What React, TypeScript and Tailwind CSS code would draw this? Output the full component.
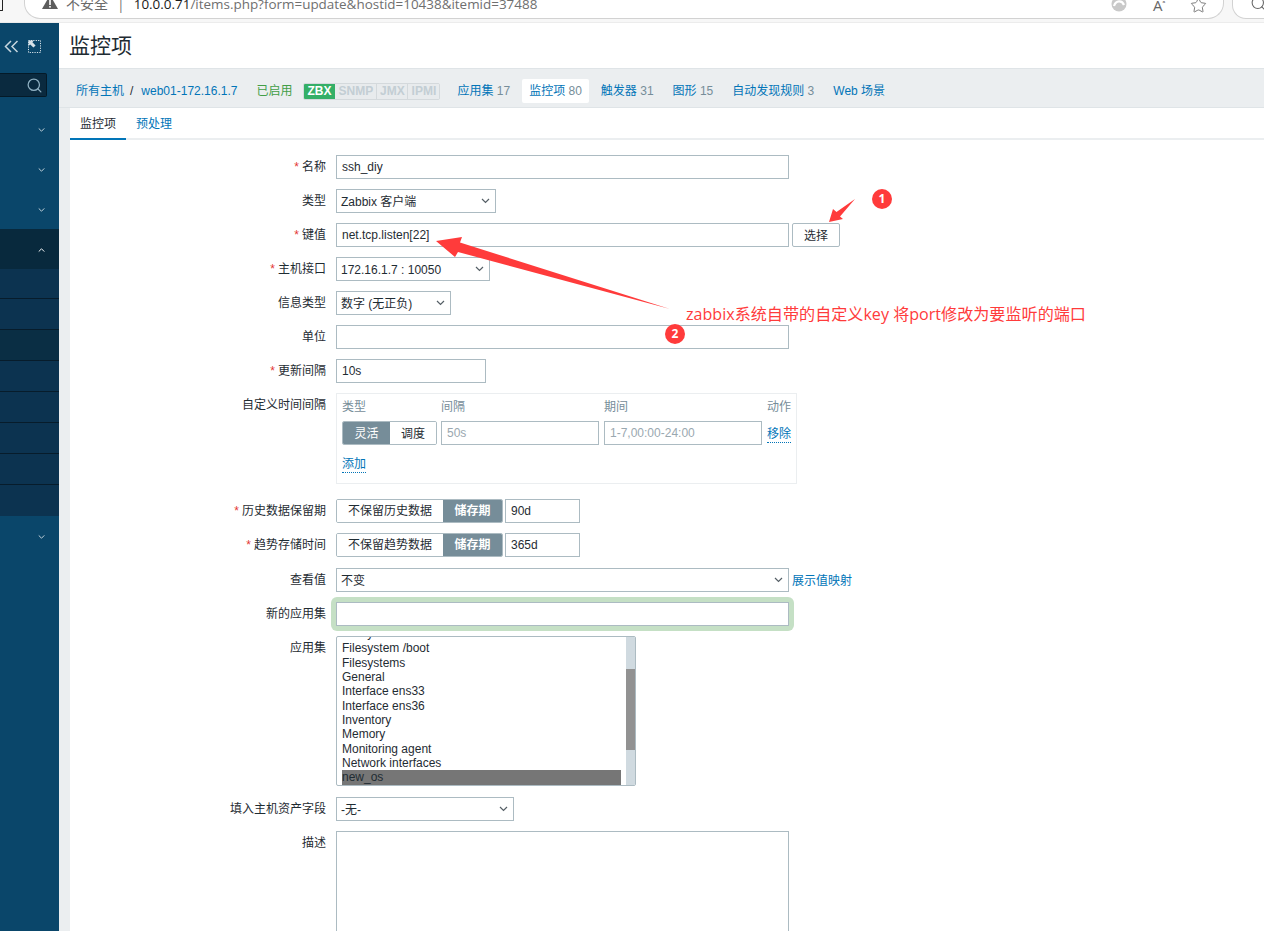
import type { ReactNode } from "react";
import { Search, Star } from "lucide-react";

const inputClass =
  "h-6 border border-[#acbbc2] bg-white px-[5px] text-xs text-[#1f2c33] outline-none";

const appItems = [
  "Filesystem /boot",
  "Filesystems",
  "General",
  "Interface ens33",
  "Interface ens36",
  "Inventory",
  "Memory",
  "Monitoring agent",
  "Network interfaces",
];

function Chevron({ up = false, className = "" }: { up?: boolean; className?: string }) {
  return (
    <svg width="9" height="6" viewBox="0 0 9 6" fill="none" className={className}>
      <path
        d={up ? "M1 5L4.5 1.5L8 5" : "M1 1L4.5 4.5L8 1"}
        stroke="currentColor"
        strokeWidth="1.2"
      />
    </svg>
  );
}

function MenuRow({ up = false, className = "" }: { up?: boolean; className?: string }) {
  return (
    <div className={`flex h-10 items-center justify-end pt-[2px] pr-[13px] ${className}`}>
      <Chevron up={up} className="scale-[0.8]" />
    </div>
  );
}

function Row({
  label,
  required = false,
  children,
}: {
  label: string;
  required?: boolean;
  children: ReactNode;
}) {
  return (
    <div className="flex items-start">
      <div className="flex h-6 w-[256px] items-center justify-end text-xs text-[#1f2c33]">
        {required && <span className="mr-[3px] text-[#e33734]">*</span>}
        {label}
      </div>
      <div className="ml-[10px] flex items-start">{children}</div>
    </div>
  );
}

function Select({ value, width }: { value: string; width: string }) {
  return (
    <div className={`${inputClass} ${width} flex items-center justify-between !pl-1 !pr-[5px]`}>
      <span className="pt-[2px]">{value}</span>
      <Chevron className="text-[#555f66]" />
    </div>
  );
}

function Segments({ off, on }: { off: string; on: string }) {
  return (
    <div className="flex h-6 w-[167px] overflow-hidden rounded-[2px] border border-[#acbbc2] text-xs">
      <div className="flex w-[106px] items-center justify-center bg-white text-[#1f2c33]">{off}</div>
      <div className="flex flex-1 items-center justify-center bg-[#768d99] font-bold text-white">{on}</div>
    </div>
  );
}

function BrowserBar() {
  return (
    <div className="flex h-[23px] shrink-0 border-b border-[#ececec] bg-[#f7f7f7]">
      <div className="h-[11px] w-[3px] rounded-br-[1px] border-r border-b border-[#222]" />
      <div className="ml-[21px] flex h-[19px] w-[1200px] items-start overflow-hidden rounded-b-[16px] border border-t-0 border-[#d2d2d2] bg-white [font-family:'Open_Sans','Noto_Sans_CJK_SC',sans-serif] text-[14px] leading-[18px]">
        <svg width="16" height="14" viewBox="0 0 16 14" className="ml-[17px] -mt-[5px] shrink-0">
          <path d="M8 0L16 14H0Z" fill="#5c5c5c" />
          <rect x="7.2" y="5" width="1.6" height="5" fill="#fff" />
          <rect x="7.2" y="11" width="1.6" height="1.6" fill="#fff" />
        </svg>
        <span className="ml-2 -mt-[5px] text-[#6a6a6a]">不安全</span>
        <span className="ml-[9px] -mt-[5px] text-[#777]">|</span>
        <span className="ml-[9px] -mt-[5px] whitespace-nowrap text-[13.45px] text-[#6f6f6f]">
          <span className="text-[#1a1a1a]">10.0.0.71</span>/items.php?form=update&amp;hostid=10438&amp;itemid=37488
        </span>
        <div className="ml-auto flex items-start">
          <svg width="16" height="16" viewBox="0 0 16 16" className="-mt-[4px]">
            <circle cx="8" cy="8" r="7.5" fill="#c9c9c9" />
            <path d="M3 10C5 4 11 4 13 9" stroke="#fff" strokeWidth="2.2" fill="none" />
          </svg>
          <span className="ml-[26px] -mt-[6px] text-[15px] text-[#666]">
            A<span className="align-super text-[7px]">ᵃ</span>
          </span>
          <Star size={17} strokeWidth={1.2} className="ml-[25px] mr-[16px] -mt-[3px] text-[#666]" />
        </div>
      </div>
      <div className="ml-[8px] flex h-[19px] flex-1 items-start overflow-hidden rounded-bl-[14px] border-b border-l border-[#d2d2d2] bg-white pl-[17px]">
        <Search size={17} strokeWidth={1.5} className="-mt-[5px] shrink-0 text-[#666]" />
      </div>
    </div>
  );
}

function Sidebar() {
  return (
    <div className="flex w-[59px] shrink-0 flex-col bg-[#0a466a] text-[#c9d7e0]">
      <div className="flex h-[50px] items-start pt-[17px] pl-[4px]">
        <svg width="15" height="13" viewBox="0 0 15 13" fill="none" stroke="#c6d6df" strokeWidth="1.5">
          <path d="M7 1L1.5 6.5L7 12M13.5 1L8 6.5L13.5 12" />
        </svg>
        <svg width="13" height="13" viewBox="0 0 13 13" fill="none" className="ml-[9px]">
          <rect x="0.5" y="0.5" width="12" height="12" stroke="#d7e2e8" strokeDasharray="1.2 1.2" />
          <path d="M0.5 0.5H6L4.4 2.2L7.6 5.4L5.4 7.6L2.2 4.4L0.5 6Z" fill="#d7e2e8" />
        </svg>
      </div>
      <div className="flex h-6 w-[47px] items-center justify-end rounded-r-[2px] border border-l-0 border-[#041a28] bg-[#0a2a3f] pr-[3px]">
        <Search size={17} strokeWidth={1.8} className="text-[#8fb0c2]" />
      </div>
      <div className="mt-3">
        <MenuRow />
      </div>
      <MenuRow />
      <MenuRow />
      <MenuRow up className="bg-[#08293d] text-white" />
      <div className="flex flex-col">
        {[0, 1, 2, 3, 4, 5, 6, 7].map((i) => (
          <div
            key={i}
            className={`h-[31px] border-[#071c2b] ${i === 0 ? "!h-[30px]" : ""} ${i < 7 ? "border-b" : ""} ${
              i === 2 ? "bg-[#0a2e44]" : "bg-[#0c3350]"
            }`}
          />
        ))}
      </div>
      <MenuRow />
    </div>
  );
}

function NavBar() {
  return (
    <div className="flex h-[40px] shrink-0 items-center gap-[19px] border-y border-[#dfe4e7] bg-[#ebeef0] pt-[6px] pl-[17px] text-xs text-[#0275b8]">
      <div className="whitespace-nowrap">
        所有主机<span className="ml-[6px] mr-[8px] text-[#1f2c33]">/</span>web01-172.16.1.7
      </div>
      <span className="text-[#429e47]">已启用</span>
      <div className="-ml-2 flex h-[17px] overflow-hidden rounded-[2px] border border-[#d4d9dc] text-xs font-bold text-[#c3ced4]">
        <span className="-my-px -ml-px flex w-[32px] items-center justify-center bg-[#34af67] text-white">ZBX</span>
        <span className="flex w-[42px] items-center justify-center border-r border-[#d4d9dc] bg-[#e8ebed]">SNMP</span>
        <span className="flex w-[31px] items-center justify-center border-r border-[#d4d9dc] bg-[#e8ebed]">JMX</span>
        <span className="flex w-[31px] items-center justify-center bg-[#e8ebed]">IPMI</span>
      </div>
      <span className="-ml-[2px]">应用集 <span className="text-[#768d99]">17</span></span>
      <span className="-mx-[7px] rounded-[2px] bg-white px-[7px] py-[4px]">监控项 <span className="text-[#768d99]">80</span></span>
      <span>触发器 <span className="text-[#768d99]">31</span></span>
      <span>图形 <span className="text-[#768d99]">15</span></span>
      <span>自动发现规则 <span className="text-[#768d99]">3</span></span>
      <span>Web 场景</span>
    </div>
  );
}

function CustomIntervals() {
  return (
    <div className="h-[91px] w-[461px] border border-[#ebeef0] px-[5px] pt-[5px] text-xs">
      <div className="grid grid-cols-[94px_158px_158px_auto] gap-x-[5px] text-[#768d99]">
        <span className="h-4 leading-4">类型</span>
        <span className="h-4 leading-4">间隔</span>
        <span className="h-4 leading-4">期间</span>
        <span className="h-4 leading-4">动作</span>
      </div>
      <div className="mt-[6px] grid grid-cols-[94px_158px_158px_auto] gap-x-[5px]">
        <div className="flex h-6 w-[95px] overflow-hidden rounded-[2px] border border-[#acbbc2]">
          <div className="flex w-[47px] items-center justify-center bg-[#768d99] pt-px text-white">灵活</div>
          <div className="flex flex-1 items-center justify-center bg-white pt-px text-[#1f2c33]">调度</div>
        </div>
        <div className={`${inputClass} flex items-center text-[#9aa8b0]`}>50s</div>
        <div className={`${inputClass} flex items-center text-[#9aa8b0]`}>1-7,00:00-24:00</div>
        <span className="mt-[4px] self-center border-b border-dotted border-[#0275b8] leading-[15px] text-[#0275b8]">移除</span>
      </div>
      <div className="mt-[11px] h-[18px]">
        <span className="inline-block border-b border-dotted border-[#0275b8] leading-[15px] text-[#0275b8]">添加</span>
      </div>
    </div>
  );
}

function AppListbox() {
  return (
    <div className="flex h-[150px] w-[300px] overflow-hidden rounded-[2px] border border-[#acbbc2] bg-white text-xs text-[#1f2c33]">
      <div className="h-full w-[289px] overflow-hidden px-[5px]">
        <div className="-mt-[10px]">
          {/* row scrolled almost out of view, only its descender shows */}
          <div className="h-[14.33px] leading-[12px]">Filesystem /</div>
          {appItems.map((name) => (
            <div key={name} className="h-[14.33px] leading-[14.33px]">{name}</div>
          ))}
          <div className="h-[15px] bg-[#767676] leading-[15px]">new_os</div>
        </div>
      </div>
      <div className="h-full flex-1 bg-[#d0dae0]">
        <div className="mt-[32px] h-[81px] bg-[#929292]" />
      </div>
    </div>
  );
}

function ItemForm() {
  return (
    <div className="flex flex-col gap-[10px] pt-[15px]">
      <Row label="名称" required>
        <input readOnly value="ssh_diy" className={`${inputClass} w-[453px]`} />
      </Row>
      <Row label="类型">
        <Select value="Zabbix 客户端" width="w-[160px]" />
      </Row>
      <Row label="键值" required>
        <input readOnly value="net.tcp.listen[22]" className={`${inputClass} w-[453px]`} />
        <button className="ml-[3px] h-6 w-[48px] rounded-[2px] border border-[#acbbc2] bg-white pt-px text-xs text-[#1f2c33]">选择</button>
      </Row>
      <Row label="主机接口" required>
        <Select value="172.16.1.7 : 10050" width="w-[154px]" />
      </Row>
      <Row label="信息类型">
        <Select value="数字 (无正负)" width="w-[115px]" />
      </Row>
      <Row label="单位">
        <input readOnly value="" className={`${inputClass} w-[453px]`} />
      </Row>
      <Row label="更新间隔" required>
        <input readOnly value="10s" className={`${inputClass} w-[150px]`} />
      </Row>
      <Row label="自定义时间间隔">
        <CustomIntervals />
      </Row>
      <div className="mt-[5px]">
        <Row label="历史数据保留期" required>
          <Segments off="不保留历史数据" on="储存期" />
          <input readOnly value="90d" className={`${inputClass} ml-[2px] w-[75px]`} />
        </Row>
      </div>
      <Row label="趋势存储时间" required>
        <Segments off="不保留趋势数据" on="储存期" />
        <input readOnly value="365d" className={`${inputClass} ml-[2px] w-[75px]`} />
      </Row>
      <div className="mt-px">
        <Row label="查看值">
          <Select value="不变" width="w-[453px]" />
          <span className="ml-[3px] flex h-6 items-center pt-[2px] text-xs text-[#0275b8]">展示值映射</span>
        </Row>
      </div>
      <Row label="新的应用集">
        <div className="rounded-[2px] shadow-[0_0_0_5px_#c5e0c5]">
          <input readOnly value="" className={`${inputClass} block w-[453px]`} />
        </div>
      </Row>
      <Row label="应用集">
        <AppListbox />
      </Row>
      <div className="mt-px">
        <Row label="填入主机资产字段">
          <Select value="-无-" width="w-[178px]" />
        </Row>
      </div>
      <Row label="描述">
        <textarea readOnly value="" className="h-[110px] w-[453px] resize-none border border-[#acbbc2] bg-white" />
      </Row>
    </div>
  );
}

function Annotations() {
  return (
    <>
      <svg width="1264" height="931" viewBox="0 0 1264 931" className="pointer-events-none absolute inset-0">
        <path d="M829 222L833 209L836.5 212L855 199L840 216.5L843 219Z" fill="#ff3b3b" />
        <path d="M436 241L462 237L460 242.5L670 309L458 252L455 257Z" fill="#ff3b3b" />
      </svg>
      <span className="absolute left-[872px] top-[189px] flex size-5 items-center justify-center rounded-full bg-[#ff3b3b] [font-family:'Open_Sans',sans-serif] text-xs font-bold text-white">1</span>
      <span className="absolute left-[665px] top-[324px] flex size-5 items-center justify-center rounded-full bg-[#ff3b3b] [font-family:'Open_Sans',sans-serif] text-xs font-bold text-white">2</span>
      <span className="absolute left-[686px] top-[303px] whitespace-nowrap [font-family:'Open_Sans','Noto_Sans_CJK_SC',sans-serif] text-[16.1px] leading-[22px] text-[#ff3b3b]">
        zabbix系统自带的自定义key 将port修改为要监听的端口
      </span>
    </>
  );
}

export default function App() {
  return (
    <div className="relative flex h-[931px] flex-col overflow-hidden bg-white [font-family:'Liberation_Sans','Noto_Sans_CJK_SC',sans-serif]">
      <BrowserBar />
      <div className="flex min-h-0 flex-1">
        <Sidebar />
        <div className="flex min-w-0 flex-1 flex-col">
          <div className="flex h-[45px] shrink-0 items-center pl-[10px] text-[21px] text-[#1f2c33]">监控项</div>
          <NavBar />
          <div className="flex-1 bg-[#ebeef0] pl-[11px]">
            <div className="h-full bg-white">
              <div className="flex h-[32px] border-b-2 border-[#ebeef0] text-xs">
                <div className="-mb-[2px] flex h-[32px] w-[56px] items-center justify-center border-b-2 border-[#0275b8] pt-[2px] text-[#1f2c33]">监控项</div>
                <div className="ml-[10px] flex items-center pt-[2px] text-[#0275b8]">预处理</div>
              </div>
              <ItemForm />
            </div>
          </div>
        </div>
      </div>
      <Annotations />
    </div>
  );
}
